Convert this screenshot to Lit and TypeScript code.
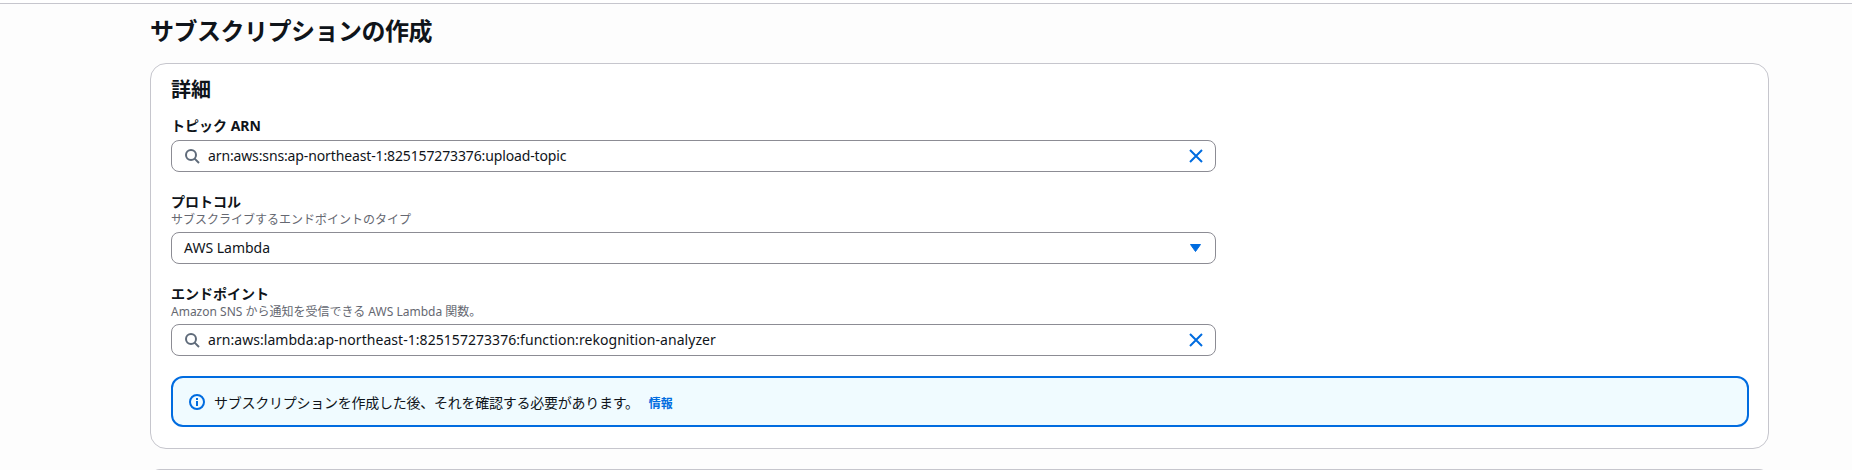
import { LitElement, html, css, svg } from "lit";
import { customElement } from "lit/decorators.js";

const searchIcon = svg`<svg class="ico" viewBox="0 0 16 16" width="16" height="16" fill="none" stroke="#5f6b7a" stroke-width="2"><circle cx="7" cy="7" r="5"/><path d="M10.6 10.6 15 15"/></svg>`;
const clearIcon = svg`<svg class="ico" viewBox="0 0 16 16" width="16" height="16" fill="none" stroke="#006ce0" stroke-width="2"><path d="M2 2l12 12M14 2 2 14"/></svg>`;
const caretIcon = svg`<svg class="ico" viewBox="0 0 16 16" width="16" height="16"><path d="M2.5 4.5h10L7.5 11.5z" fill="#006ce0" stroke="#006ce0" stroke-width="1" stroke-linejoin="round"/></svg>`;
const infoIcon = svg`<svg class="ico" viewBox="0 0 16 16" width="16" height="16" fill="none" stroke="#006ce0" stroke-width="2"><circle cx="8" cy="8" r="7"/><path d="M8 7v5M8 4v2"/></svg>`;

@customElement("app-root")
export class AppRoot extends LitElement {
  static styles = css`
    :host {
      display: block;
      height: 470px;
      overflow: hidden;
      background: #fdfdfd;
      font-family: "Noto Sans", "Noto Sans CJK JP", sans-serif;
      color: #0f141a;
      font-size: 14px;
    }
    .topline { height: 3px; border-bottom: 1px solid #c6c6cd; background: #fff; }
    .main { padding: 0 83px 0 150px; }
    h1 {
      margin: 0;
      padding-top: 11px;
      font-size: 24px;
      line-height: 32px;
      font-weight: 700;
      height: 48px;
      letter-spacing: -0.5px;
    }
    .card {
      box-sizing: border-box;
      height: 386px;
      background: #fff;
      border: 1px solid #c6c6cd;
      border-radius: 16px;
      padding: 12px 19px 20px 20px;
    }
    h2 {
      margin: 0 0 12px;
      font-size: 20px;
      line-height: 28px;
      font-weight: 700;
    }
    .field { margin-bottom: 20px; }
    .label {
      display: block;
      font-size: 14px;
      line-height: 20px;
      font-weight: 700;
    }
    .desc {
      display: block;
      font-size: 12px;
      line-height: 16px;
      color: #656871;
    }
    .control {
      margin-top: 4px;
      box-sizing: border-box;
      width: 1045px;
      height: 32px;
      border: 1px solid #8c8c94;
      border-radius: 8px;
      background: #fff;
      display: flex;
      align-items: center;
      padding: 0 11px 0 12px;
      gap: 8px;
    }
    .value { flex: 1; white-space: nowrap; line-height: 20px; }
    .value.tight { letter-spacing: -0.13px; }
    .value.loose { letter-spacing: 0.05px; }
    .ico { flex: none; display: block; }
    .alert {
      box-sizing: border-box;
      height: 51px;
      border: 2px solid #006ce0;
      border-radius: 12px;
      background: #f0fbff;
      display: flex;
      align-items: center;
      padding: 0 16px;
      gap: 9px;
    }
    .msg { letter-spacing: -0.25px; }
    .info-link { color: #006ce0; font-size: 12px; font-weight: 700; margin-left: 10px; letter-spacing: 0; }
    .next {
      margin-top: 20px;
      height: 40px;
      border-top: 1px solid #c6c6cd;
      border-radius: 10px 10px 0 0;
      background: #fff;
    }
  `;

  render() {
    return html`
      <div class="topline"></div>
      <div class="main">
        <h1>サブスクリプションの作成</h1>
        <section class="card">
          <h2>詳細</h2>
          <div class="field">
            <span class="label">トピック ARN</span>
            <div class="control">${searchIcon}<span class="value tight">arn:aws:sns:ap-northeast-1:825157273376:upload-topic</span>${clearIcon}</div>
          </div>
          <div class="field">
            <span class="label">プロトコル</span>
            <span class="desc">サブスクライブするエンドポイントのタイプ</span>
            <div class="control"><span class="value">AWS Lambda</span>${caretIcon}</div>
          </div>
          <div class="field">
            <span class="label">エンドポイント</span>
            <span class="desc">Amazon SNS から通知を受信できる AWS Lambda 関数。</span>
            <div class="control">${searchIcon}<span class="value loose">arn:aws:lambda:ap-northeast-1:825157273376:function:rekognition-analyzer</span>${clearIcon}</div>
          </div>
          <div class="alert">${infoIcon}<span class="msg">サブスクリプションを作成した後、それを確認する必要があります。<span class="info-link">情報</span></span></div>
        </section>
        <div class="next"></div>
      </div>
    `;
  }
}
